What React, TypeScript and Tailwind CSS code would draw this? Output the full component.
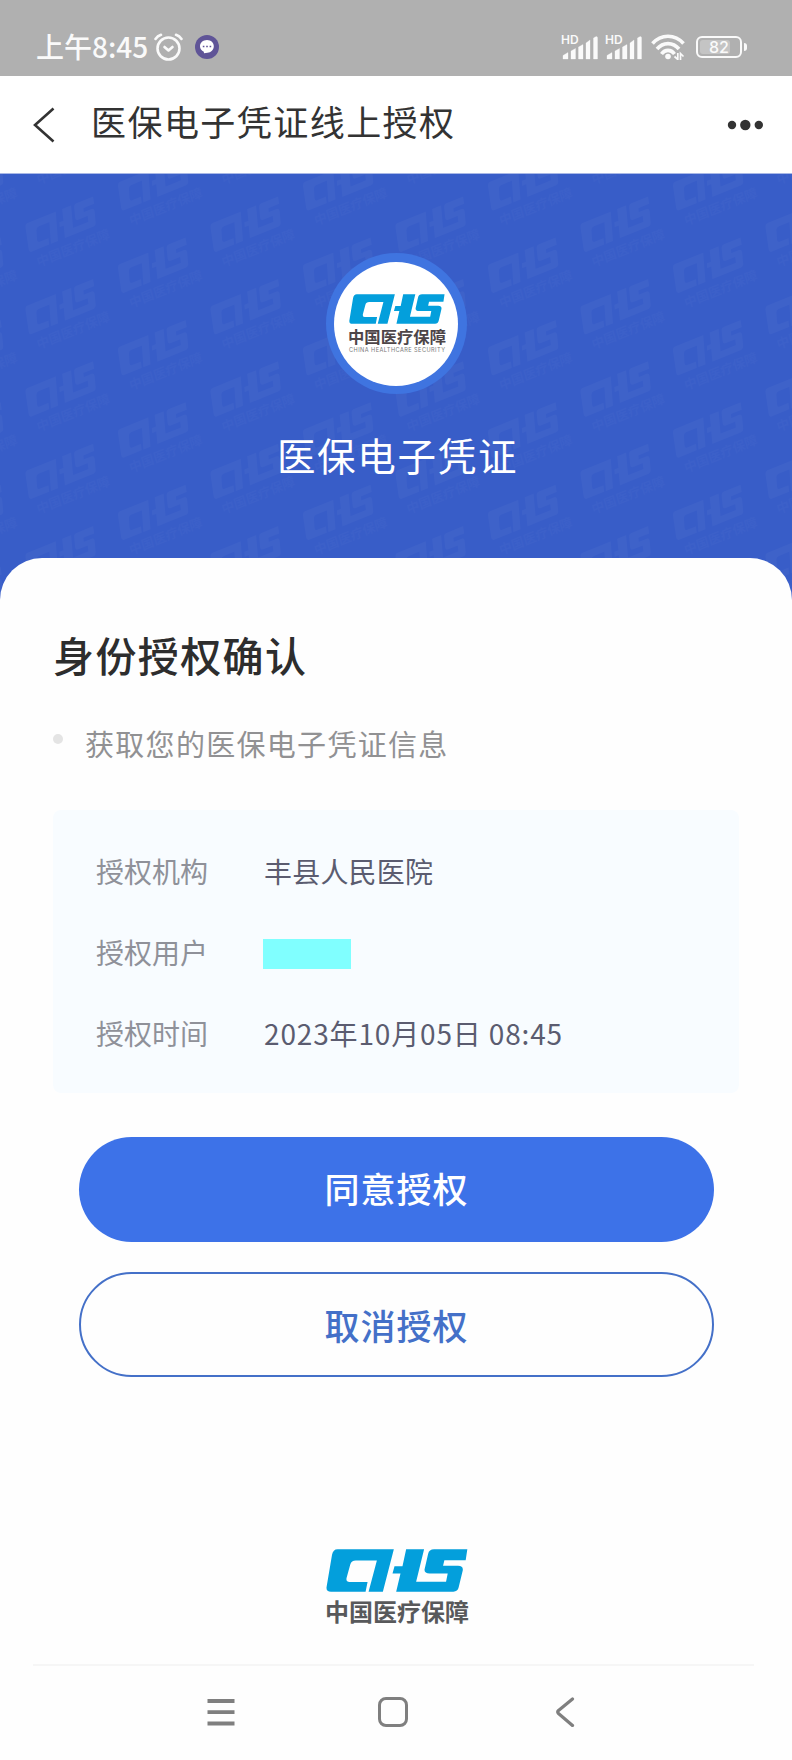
// =============================================================================
// Medical insurance e-voucher - online authorization page
// =============================================================================

const LOGO_PATH =
  'M112 87H281L248 215H205L230 121H167Q153 121 150 133L139 173Q136 186 148 186H202L196 215H92Q76 215 79 199L95 104Q98 87 112 87Z ' +
  'M318 87H372L348 185H438L443 160H389Q370 160 374 145L384 101Q387 87 402 87H502L497 120H433L429 137H474Q491 137 488 152L476 202Q473 215 460 215H288L301 160H277L283 138H307Z';

const INFO_ROWS = [
  { label: '授权机构', value: '丰县人民医院' },
  { label: '授权用户', value: '' },
  { label: '授权时间', value: '2023年10月05日 08:45' },
];

// Watermark grid: every other column is shifted by half a row
const WATERMARKS = Array.from({ length: 10 }, (_, col) =>
  Array.from({ length: 7 }, (_, row) => ({
    x: -31 + col * 92.5,
    y: (col % 2 === 0 ? 10 : -31) + row * 82.4,
  }))
).flat();

function ChsLogo({ className }: { className: string }) {
  return (
    <svg className={className} viewBox="77 86 427 130" preserveAspectRatio="none" fill="#039fdc">
      <path d={LOGO_PATH} />
    </svg>
  );
}

function SignalIcon() {
  return (
    <svg className="w-[38px] h-[30px] -mt-1 overflow-visible" viewBox="0 -4 38 30" fill="#fafafa">
      <text x="0" y="10" fontSize="12" fontWeight="600" fontFamily="Inter, sans-serif">
        HD
      </text>
      <path d="M2 21.5L7 18.5V25H2Z M10 17L14.500 14.500V25H10Z M17.500 13L22 10.500V25H17.500Z M25 9L29 6V25H25Z M32.500 4Q36.500 1 36.500 4V25H32.500Z" stroke="#fafafa" strokeWidth="0.300" strokeLinejoin="round" />
    </svg>
  );
}

function StatusBar() {
  return (
    <div className="h-[76px] bg-[#b0b0b0] flex items-center pt-[18px] pl-9 pr-[45px] text-[#fafafa]">
      <span className="w-[115px] text-[28px] leading-[40px] font-medium whitespace-nowrap -mt-[3px]">上午8:45</span>
      <svg className="ml-[2px] w-[30px] h-[30px]" viewBox="0 0 30 30" fill="none" stroke="#fafafa" strokeLinecap="round">
        <circle cx="15.500" cy="16.500" r="11" strokeWidth="2.600" />
        <path d="M2.500 7Q4.500 4 8 2.800M28.500 7Q26.500 4 23 2.800" strokeWidth="2.600" />
        <path d="M11.500 15L15.500 18.500L19.500 15" strokeWidth="2.600" strokeLinejoin="round" />
      </svg>
      <svg className="ml-3 w-6 h-6" viewBox="0 0 24 24">
        <circle cx="12" cy="12" r="12" fill="#5f5497" />
        <path d="M12 5C16 5 18.800 7.800 18.800 11.300S16 17.800 12.500 17.800L9 18.300L8.800 16.800C6.500 15.800 5 13.800 5 11.300C5 7.800 8 5 12 5Z" fill="#fff" />
        <path d="M7.800 11.500h1.600M11.200 11.500h1.600M14.600 11.500h1.600" stroke="#5f5497" strokeWidth="1.400" />
      </svg>

      <div className="ml-auto flex items-center">
        <SignalIcon />
        <div className="ml-[6px] flex">
          <SignalIcon />
        </div>
        <svg className="ml-2 w-[34px] h-[26px]" viewBox="0 0 34 26" fill="none" stroke="#fafafa" strokeWidth="3.600">
          <path d="M1.500 9.500C10 -0.200 24 -0.200 32.500 9.500" />
          <path d="M6 15C12 7.800 22 7.800 28 15" />
          <path d="M10.500 20C14 15.200 20 15.200 23.500 20" />
          <circle cx="17" cy="22.500" r="2.800" fill="#fafafa" stroke="none" />
          <path d="M26.800 19V25.500L23.500 22.500M29.500 26V19.500L32.500 22.500" strokeWidth="1.700" />
        </svg>
        <div className="ml-[11px] w-[46px] h-[22px] rounded-[6px] border-[2px] border-[#fafafa] p-[2px]">
          <div className="w-[30px] h-full rounded-[3px] bg-[#c4c4c4]">
            <span className="block w-[38px] text-center text-[16px] leading-[14px] font-medium font-['Inter',sans-serif]">82</span>
          </div>
        </div>
        <div className="ml-[2px] w-[3px] h-2 rounded-r bg-[#fafafa]" />
      </div>
    </div>
  );
}

function NavHeader() {
  return (
    <header className="h-[98px] bg-white flex items-center pl-8 pr-[29px] border-b border-[#a9b8e6]">
      <svg className="w-6 h-9" viewBox="0 0 24 36" fill="none" stroke="#333" strokeWidth="2.600">
        <path d="M21.500 1.500L3 18L21.500 34.500" />
      </svg>
      <h1 className="ml-[35px] text-[35px] leading-[48px] tracking-[1.450px] text-[#333] -mt-[7px]">医保电子凭证线上授权</h1>
      <svg className="ml-auto w-9 h-3" viewBox="0 0 36 12" fill="#333">
        <circle cx="5" cy="6" r="4.200" />
        <circle cx="18.300" cy="6" r="5.200" />
        <circle cx="31.800" cy="6" r="4.200" />
      </svg>
    </header>
  );
}

function Hero() {
  return (
    <section className="relative h-[439px] bg-[#385dc8] overflow-hidden">
      <svg className="absolute inset-0 w-full h-full" viewBox="0 0 792 439" fill="#fff">
        {WATERMARKS.map(({ x, y }) => (
          <g key={`${x}-${y}`} transform={`translate(${x} ${y}) rotate(-22) skewX(-6)`} opacity="0.027">
            <path d={LOGO_PATH} transform="scale(0.182 0.220) translate(-290 -155)" />
            <text x="-34" y="30" fontSize="13" fontWeight="700" textLength="78" opacity="0.700">
              中国医疗保障
            </text>
          </g>
        ))}
      </svg>

      <div className="relative flex flex-col items-center pt-[79px]">
        <div className="w-[141px] h-[141px] rounded-full bg-[#3f74e0] flex items-center justify-center">
          <div className="w-[124px] h-[124px] rounded-full bg-white flex flex-col items-center pt-[32px]">
            <ChsLogo className="ml-[2px] w-[96px] h-[30px]" />
            <svg className="ml-[2px] w-[98px] h-[30px]" viewBox="0 0 98 30" fill="#4d4548">
              <text x="0" y="18.500" fontSize="16" fontWeight="700" textLength="98" lengthAdjust="spacingAndGlyphs">中国医疗保障</text>
              <text x="1" y="27.500" fontSize="5.600" fontFamily="Inter, sans-serif" textLength="96" fill="#777">CHINA HEALTHCARE SECURITY</text>
            </svg>
          </div>
        </div>
        <h2 className="mt-[33px] text-[38.500px] leading-[54px] tracking-[1.700px] text-white pl-[3px]">医保电子凭证</h2>
      </div>
    </section>
  );
}

function AuthCard() {
  return (
    <main className="relative -mt-[55px] h-[1106px] rounded-t-[42px] bg-[#fefefe] pt-[68px] px-[53px]">
      <h3 className="text-[41px] leading-[56px] tracking-[1.400px] font-medium text-[#2d2d2d]">身份授权确认</h3>
      <div className="mt-[41px] flex items-center">
        <span className="w-[10px] h-[10px] rounded-full bg-[#e4e4e4] -mt-[9px]" />
        <p className="ml-[22px] text-[29px] leading-[40px] tracking-[1.300px] text-[#919193]">获取您的医保电子凭证信息</p>
      </div>

      <dl className="mt-[47px] h-[283px] rounded-lg bg-[#f8fcff] pl-[43px] pt-[41px]">
        {INFO_ROWS.map(({ label, value }) => (
          <div key={label} className="h-[81px] flex items-start">
            <dt className="w-[168px] text-[28px] leading-[40px] text-[#8f9199]">{label}</dt>
            <dd className={`text-[28px] leading-[40px] text-[#5b5c70] ${value.length > 10 ? 'tracking-[0.850px]' : 'tracking-[0.200px]'}`}>
              {value || <span className="block -ml-[1px] mt-[7px] w-[88px] h-[30px] bg-[#80ffff]" />}
            </dd>
          </div>
        ))}
      </dl>

      <div className="mt-[44px] pl-[26px] pr-[25px] flex flex-col gap-[30px]">
        <button className="h-[105px] rounded-full bg-[#3d72e8] text-white text-[35px] font-medium tracking-[1px] pb-[2px]">同意授权</button>
        <button className="h-[105px] rounded-full border-2 border-[#4470c8] text-[#4470c8] text-[35px] font-medium tracking-[1px] pt-[2px]">取消授权</button>
      </div>

      <div className="mt-[172px] flex flex-col items-center">
        <ChsLogo className="ml-[2px] w-[142px] h-[43px]" />
        <svg className="ml-[2px] w-[144px] h-[32px]" viewBox="0 0 144 32" fill="#58595b">
          <text x="0" y="28.500" fontSize="24" fontWeight="700" textLength="144" lengthAdjust="spacingAndGlyphs">中国医疗保障</text>
        </svg>
      </div>
    </main>
  );
}

function SystemNav() {
  return (
    <nav className="ml-[33px] mr-[38px] h-24 border-t-2 border-[#f6f6f6] flex">
      <svg className="ml-[174px] mt-[32px] w-7 h-7" viewBox="0 0 28 28" stroke="#7f7f7f" strokeWidth="3.800">
        <path d="M0.500 3H27.500M0.500 14.200H27.500M0.500 25.500H27.500" />
      </svg>
      <div className="ml-[143px] mt-[31px] w-[30px] h-[30px] rounded-[8px] border-[3.500px] border-[#7f7f7f]" />
      <svg className="ml-[147px] mt-[31px] w-5 h-[30px]" viewBox="0 0 20 30" fill="none" stroke="#7f7f7f" strokeWidth="3.200" strokeLinecap="round" strokeLinejoin="round">
        <path d="M17.500 2L3.500 13.500Q2 15 3.500 16.500L17.500 28.500" />
      </svg>
    </nav>
  );
}

export default function App() {
  return (
    <div className="w-[792px] h-[1760px] overflow-hidden bg-[#fefefe] font-['Noto_Sans_CJK_SC',sans-serif]" lang="zh-CN">
      <StatusBar />
      <NavHeader />
      <Hero />
      <AuthCard />
      <SystemNav />
    </div>
  );
}
